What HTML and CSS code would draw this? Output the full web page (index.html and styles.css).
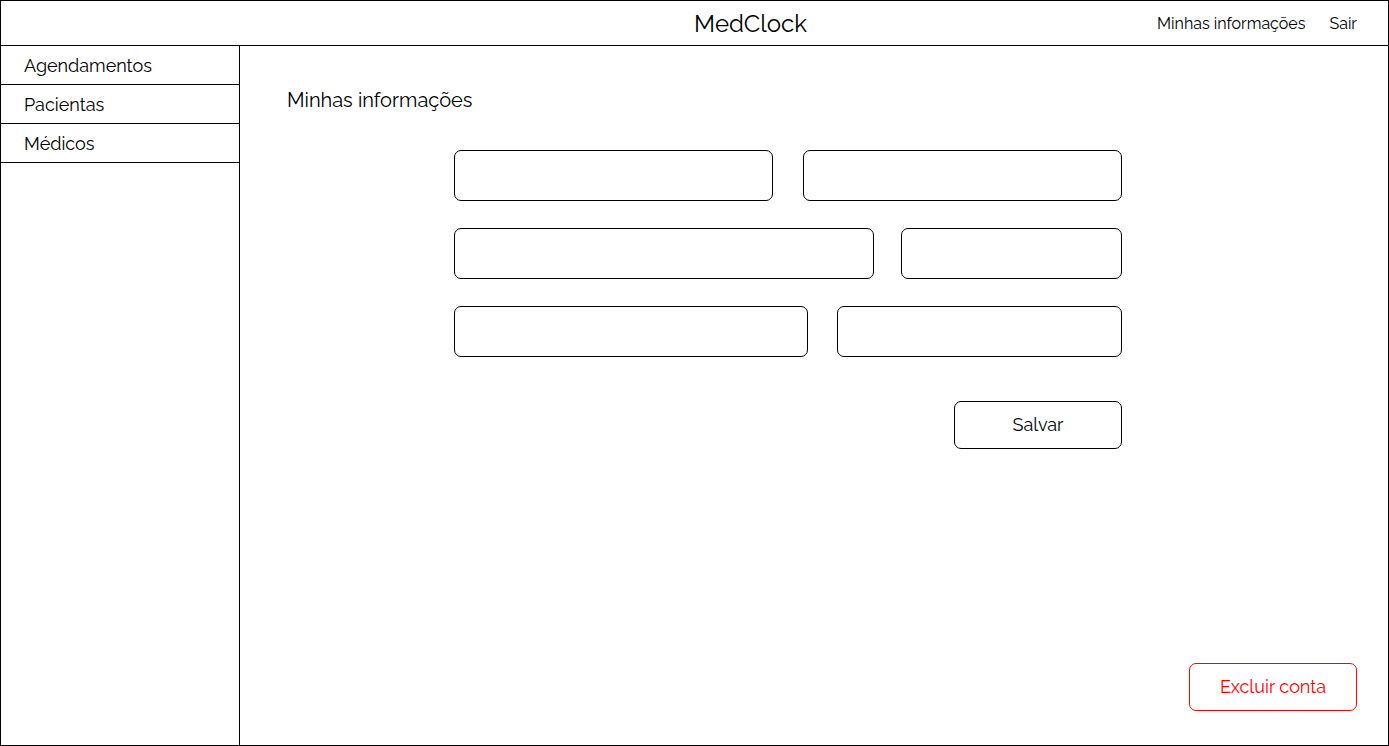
FILE: index.html
```html
<!DOCTYPE html>
<html lang="pt-BR">
<head>
<meta charset="utf-8">
<meta name="viewport" content="width=device-width, initial-scale=1">
<title>MedClock</title>
<link rel="stylesheet" href="styles.css">
</head>
<body class="app">
<header class="topbar">
  <span class="brand">MedClock</span>
  <nav class="account" aria-label="Conta">
    <a class="account-link" href="#">Minhas informações</a>
    <a class="account-link" href="#">Sair</a>
  </nav>
</header>
<div class="shell">
  <nav class="sidebar" aria-label="Principal">
    <a class="side-link" href="#">Agendamentos</a>
    <a class="side-link" href="#">Pacientas</a>
    <a class="side-link" href="#">Médicos</a>
  </nav>
  <main class="content">
    <h1 class="title">Minhas informações</h1>
    <form class="form">
      <div class="row row-even">
        <input class="field" type="text" aria-label="Nome">
        <input class="field" type="text" aria-label="Sobrenome">
      </div>
      <div class="row row-wide">
        <input class="field" type="email" aria-label="E-mail">
        <input class="field" type="tel" aria-label="Telefone">
      </div>
      <div class="row row-mid">
        <input class="field" type="text" aria-label="Endereço">
        <input class="field" type="text" aria-label="Cidade">
      </div>
      <button class="button save" type="submit">Salvar</button>
    </form>
    <button class="button delete" type="button">Excluir conta</button>
  </main>
</div>
</body>
</html>
```
FILE: styles.css
```css
* { box-sizing: border-box; }

.app {
  display: flex;
  flex-direction: column;
  min-height: 100vh;
  margin: 0;
  border: 1px solid #000;
  background: #fff;
  color: #000;
  font-family: Raleway, Lato, "Open Sans", sans-serif;
  font-size: 18px;
}

.topbar {
  display: grid;
  grid-template-columns: 1fr auto 1fr;
  align-items: center;
  min-height: 45px;
  padding: 2px 31px 0 143px;
  border-bottom: 1px solid #000;
}

.brand {
  grid-column: 2;
  font-size: 24px;
  line-height: 30px;
}

.account {
  display: flex;
  justify-content: flex-end;
  gap: 24px;
}

.account-link {
  color: inherit;
  font-size: 16px;
  line-height: 20px;
  text-decoration: none;
}

.shell {
  display: flex;
  flex: 1;
}

.sidebar {
  flex: 0 0 239px;
  border-right: 1px solid #000;
}

.side-link {
  display: block;
  padding: 9px 23px 7px;
  border-bottom: 1px solid #000;
  color: inherit;
  font-size: 18px;
  line-height: 22px;
  text-decoration: none;
}

.content {
  display: flex;
  flex: 1;
  flex-direction: column;
  padding: 42px 31px 34px 47px;
}

.title {
  margin: 0;
  font-size: 20px;
  font-weight: 400;
  line-height: 24px;
}

.form {
  display: flex;
  flex-direction: column;
  gap: 27px;
  width: 100%;
  max-width: 736px;
  margin: 38px auto 0;
  padding-right: 68px;
}

.row { display: grid; }

.row-even {
  grid-template-columns: 1fr 1fr;
  gap: 30px;
}

.row-wide {
  grid-template-columns: 420fr 221fr;
  gap: 27px;
}

.row-mid {
  grid-template-columns: 354fr 285fr;
  gap: 29px;
}

.field {
  width: 100%;
  min-width: 0;
  height: 51px;
  padding: 0 16px;
  border: 1px solid #000;
  border-radius: 7px;
  background: #fff;
  font: inherit;
}

.button {
  align-self: flex-end;
  width: 168px;
  height: 48px;
  padding: 0 0 2px;
  border: 1px solid currentColor;
  border-radius: 7px;
  background: #fff;
  color: #000;
  font: inherit;
}

.save { margin-top: 17px; }

.delete {
  margin-top: auto;
  color: #f00;
}
```
